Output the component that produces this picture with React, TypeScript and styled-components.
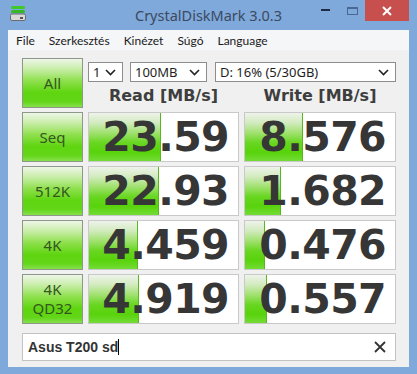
import React from 'react';
import styled, { createGlobalStyle } from 'styled-components';

const GlobalStyle = createGlobalStyle`
  html, body {
    margin: 0;
    padding: 0;
    background: #7fa8db;
  }
  * {
    box-sizing: border-box;
  }
`;

type Result = {
  label: string[];
  read: string;
  readBar: number;
  write: string;
  writeBar: number;
};

const RESULTS: Result[] = [
  { label: ['Seq'], read: '23.59', readBar: 72, write: '8.576', writeBar: 58 },
  { label: ['512K'], read: '22.93', readBar: 70, write: '1.682', writeBar: 36 },
  { label: ['4K'], read: '4.459', readBar: 49, write: '0.476', writeBar: 20 },
  { label: ['4K', 'QD32'], read: '4.919', readBar: 50, write: '0.557', writeBar: 22 },
];

const MENU = ['File', 'Szerkesztés', 'Kinézet', 'Súgó', 'Language'];

const Window = styled.div`
  width: 417px;
  height: 374px;
  background: #7fa8db;
  display: flex;
  flex-direction: column;
  padding: 0 8px 7px 8px;
  font-family: 'Noto Sans', 'Open Sans', sans-serif;
`;

const TitleBar = styled.div`
  height: 30px;
  margin: 0 -8px;
  display: grid;
  grid-template-columns: 1fr auto 1fr;
  align-items: start;
`;

const AppIcon = styled.div`
  padding: 5px 0 0 10px;
  height: 30px;
`;

const Title = styled.div`
  font-size: 14.5px;
  line-height: 30px;
  color: #3b4a60;
`;

const Controls = styled.div`
  display: flex;
  justify-content: flex-end;
  padding-right: 8px;
`;

const ControlButton = styled.div<{ $close?: boolean }>`
  width: ${p => (p.$close ? '44px' : '26px')};
  height: 21px;
  display: flex;
  align-items: center;
  justify-content: center;
  background: ${p => (p.$close ? '#c7504f' : 'transparent')};
`;

const MenuBar = styled.div`
  height: 20px;
  background: #f5f6f8;
  display: flex;
  align-items: center;
  padding-left: 8px;
  gap: 14px;
  font-family: Lato, 'Noto Sans', sans-serif;
  font-size: 12px;
  color: #1a1a1a;
`;

const Content = styled.div`
  flex: 1;
  background: #f0f0f0;
  padding: 8px 13px 6px 14px;
  display: flex;
  flex-direction: column;
`;

const Grid = styled.div`
  display: grid;
  grid-template-columns: 61px 151px 152px;
  grid-auto-rows: 50px;
  column-gap: 5px;
  row-gap: 4px;
`;

const GreenButton = styled.div`
  border: 1px solid #8e9889;
  background: linear-gradient(
    to bottom,
    #eef6e8 0%,
    #c6eda4 22%,
    #8fe04e 45%,
    #5fd510 70%,
    #62d617 88%,
    #86e04c 100%
  );
  display: flex;
  flex-direction: column;
  align-items: center;
  justify-content: center;
  font-size: 15px;
  line-height: 19px;
  color: #34561f;
  font-family: 'Noto Sans', 'Open Sans', sans-serif;
`;

const TopControls = styled.div`
  grid-column: 2 / 4;
  display: flex;
  flex-direction: column;
  padding-top: 4px;
`;

const SelectRow = styled.div`
  display: flex;
  height: 20px;
`;

const Select = styled.div<{ $width: number; $gap: number }>`
  width: ${p => p.$width}px;
  margin-right: ${p => p.$gap}px;
  height: 20px;
  background: #fff;
  border: 1px solid #8d8d8d;
  display: flex;
  align-items: center;
  justify-content: space-between;
  padding: 0 6px 0 4px;
  font-size: 13px;
  color: #1e1e1e;
`;

const Headers = styled.div`
  display: grid;
  grid-template-columns: 151px 152px;
  column-gap: 5px;
  flex: 1;
  align-items: center;
`;

const Header = styled.div`
  text-align: center;
  font-family: 'DejaVu Sans', sans-serif;
  font-weight: bold;
  font-size: 16px;
  color: #3e3e3e;
  padding-top: 1px;
`;

const Cell = styled.div`
  position: relative;
  background: #fff;
  border: 1px solid #c9c9c9;
  display: flex;
  align-items: center;
  justify-content: flex-end;
  padding-right: 9px;
  overflow: hidden;
`;

const Bar = styled.div`
  position: absolute;
  left: 0;
  top: 0;
  bottom: 0;
  border-right: 1px solid #58b71e;
  background: linear-gradient(
    to bottom,
    #eef3ea 0%,
    #d2ebbf 20%,
    #a4e274 40%,
    #68d620 62%,
    #58d30c 82%,
    #74dc36 100%
  );
`;

const Value = styled.span`
  position: relative;
  font-family: 'DejaVu Sans', sans-serif;
  font-weight: bold;
  font-size: 41px;
  line-height: 41px;
  color: #363636;
  letter-spacing: -0.6px;
`;

const Comment = styled.div`
  margin-top: 9px;
  height: 28px;
  background: #fff;
  border: 1px solid #c3c3c3;
  display: flex;
  align-items: center;
  justify-content: space-between;
  padding: 0 9px 0 5px;
`;

const CommentText = styled.span`
  font-family: 'Liberation Sans', Arial, sans-serif;
  font-weight: bold;
  font-size: 14px;
  color: #333;
  display: flex;
  align-items: center;
`;

const Caret = styled.span`
  display: inline-block;
  width: 1px;
  height: 16px;
  background: #000;
`;

const Chevron = () => (
  <svg width="11" height="7" viewBox="0 0 11 7">
    <path d="M1 1 L5.5 5.5 L10 1" fill="none" stroke="#222" strokeWidth="1.6" />
  </svg>
);

const DiskIcon = () => (
  <svg width="17" height="17" viewBox="0 0 17 17">
    <rect x="1" y="1" width="14" height="3" rx="1.5" fill="#3fc92a" />
    <rect x="1" y="5" width="14" height="3" rx="1.5" fill="#36b824" />
    <rect x="0.5" y="9" width="15" height="6.5" rx="1.5" fill="#d9d9d9" stroke="#6b6b6b" />
    <rect x="10" y="12" width="3" height="2" fill="#555" />
  </svg>
);

const App: React.FC = () => {
  return (
    <>
      <GlobalStyle />
      <Window>
        <TitleBar>
          <AppIcon>
            <DiskIcon />
          </AppIcon>
          <Title>CrystalDiskMark 3.0.3</Title>
          <Controls>
            <ControlButton>
              <svg width="10" height="3" viewBox="0 0 10 3">
                <rect x="0" y="0" width="9" height="2" fill="#1f2d44" />
              </svg>
            </ControlButton>
            <ControlButton>
              <svg width="11" height="8" viewBox="0 0 11 8">
                <rect x="0.5" y="0.5" width="10" height="7" fill="none" stroke="#4a6892" />
                <rect x="0.5" y="0.5" width="10" height="1.5" fill="#4a6892" />
              </svg>
            </ControlButton>
            <ControlButton $close>
              <svg width="10" height="10" viewBox="0 0 10 10">
                <path d="M1 1 L9 9 M9 1 L1 9" stroke="#fff" strokeWidth="2" />
              </svg>
            </ControlButton>
          </Controls>
        </TitleBar>
        <MenuBar>
          {MENU.map(m => (
            <span key={m}>{m}</span>
          ))}
        </MenuBar>
        <Content>
          <Grid>
            <GreenButton>All</GreenButton>
            <TopControls>
              <SelectRow>
                <Select $width={35} $gap={7}>
                  <span>1</span>
                  <Chevron />
                </Select>
                <Select $width={77} $gap={8}>
                  <span>100MB</span>
                  <Chevron />
                </Select>
                <Select $width={181} $gap={0}>
                  <span>D: 16% (5/30GB)</span>
                  <Chevron />
                </Select>
              </SelectRow>
              <Headers>
                <Header>Read [MB/s]</Header>
                <Header>Write [MB/s]</Header>
              </Headers>
            </TopControls>
            {RESULTS.map(r => (
              <React.Fragment key={r.label.join(' ')}>
                <GreenButton>
                  {r.label.map(l => (
                    <span key={l}>{l}</span>
                  ))}
                </GreenButton>
                <Cell>
                  <Bar style={{ width: r.readBar }} />
                  <Value>{r.read}</Value>
                </Cell>
                <Cell>
                  <Bar style={{ width: r.writeBar }} />
                  <Value>{r.write}</Value>
                </Cell>
              </React.Fragment>
            ))}
          </Grid>
          <Comment>
            <CommentText>
              Asus T200 sd
              <Caret />
            </CommentText>
            <svg width="12" height="12" viewBox="0 0 12 12">
              <path d="M1 1 L11 11 M11 1 L1 11" stroke="#333" strokeWidth="1.8" />
            </svg>
          </Comment>
        </Content>
      </Window>
    </>
  );
};

export default App;
